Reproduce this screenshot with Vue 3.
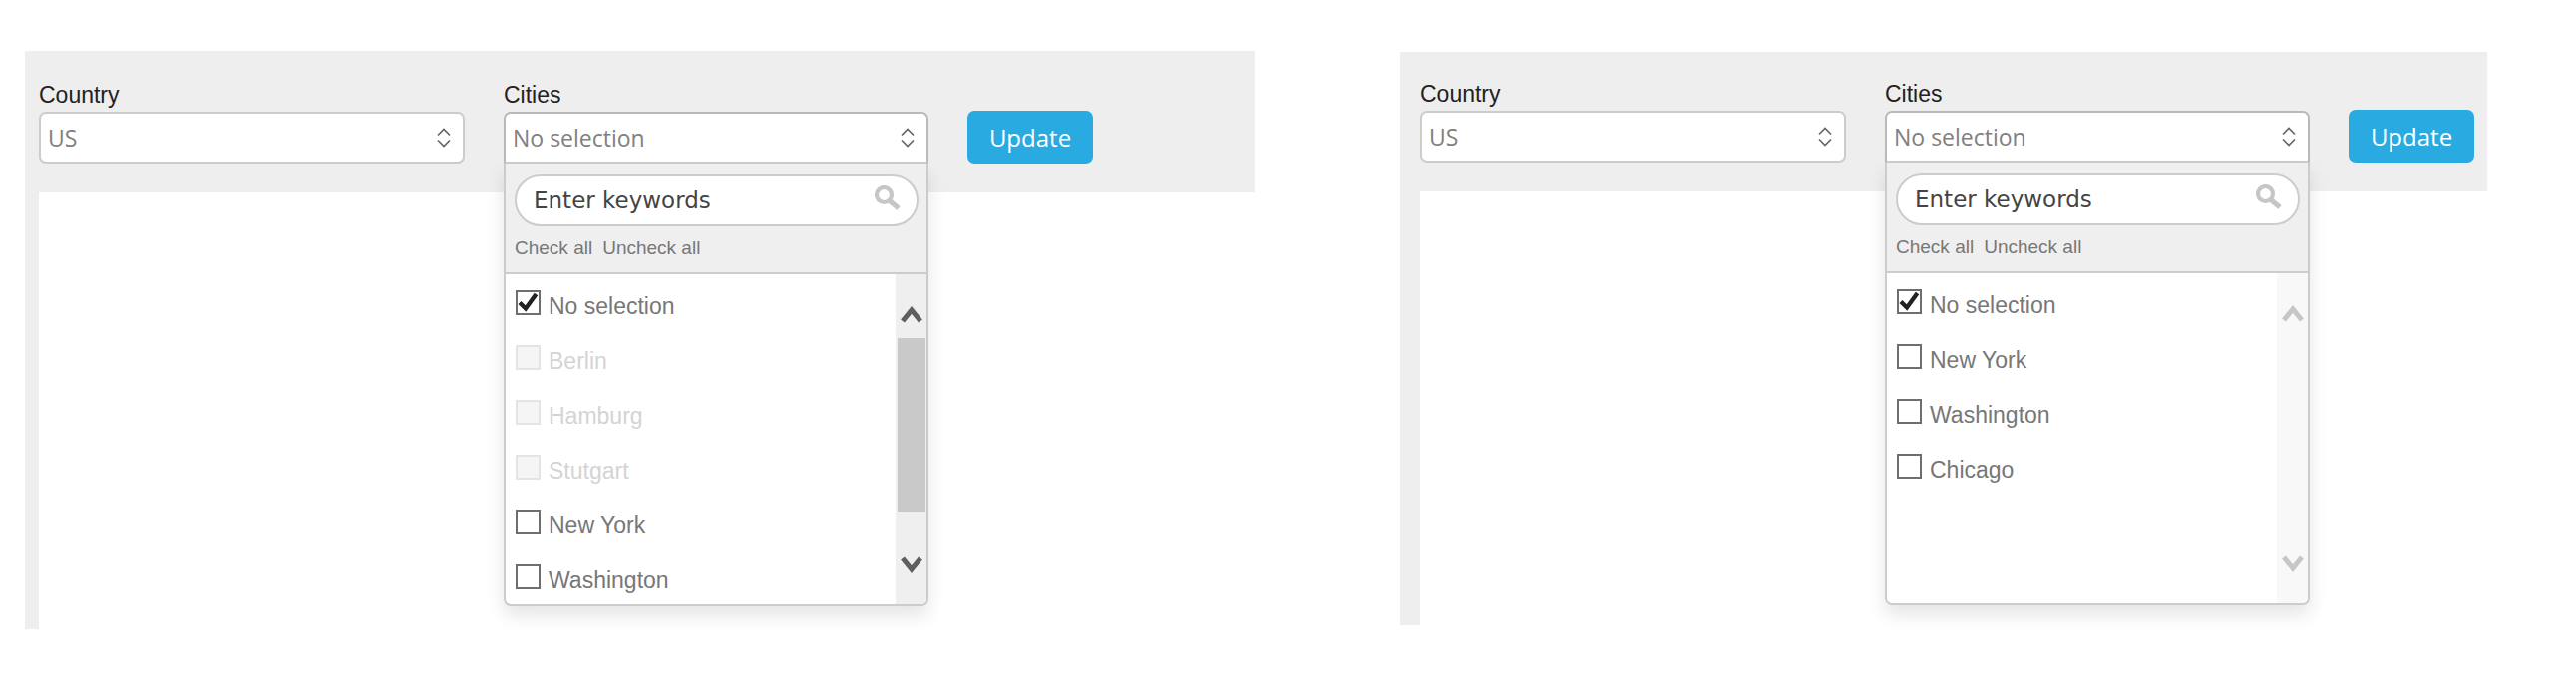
<template>
  <div class="page">
    <section
      v-for="panel in panels"
      :key="panel.id"
      class="panel"
      :class="`panel--${panel.id}`"
    >
      <div class="toolbar">
        <div class="field">
          <label class="field__label">Country</label>
          <div class="select">
            <span class="select__value">US</span>
            <svg class="select__arrows" width="14" height="20" viewBox="0 0 14 20">
              <path d="M1 7.5 7 1.5l6 6M1 12.5l6 6 6-6" />
            </svg>
          </div>
        </div>

        <div class="field field--cities">
          <label class="field__label">Cities</label>
          <div class="select select--open">
            <span class="select__value">No selection</span>
            <svg class="select__arrows" width="14" height="20" viewBox="0 0 14 20">
              <path d="M1 7.5 7 1.5l6 6M1 12.5l6 6 6-6" />
            </svg>
          </div>

          <div class="dropdown">
            <div class="dropdown__head">
              <div class="search">
                <span class="search__text">Enter keywords</span>
                <svg class="search__icon" width="26" height="25" viewBox="0 0 26 25">
                  <circle cx="9.5" cy="9.5" r="7.5" />
                  <path d="m15 15.5 9 7.5" />
                </svg>
              </div>
              <div class="links">
                <a>Check all</a>
                <a>Uncheck all</a>
              </div>
            </div>

            <div class="dropdown__body">
              <ul class="options">
                <li
                  v-for="option in panel.options"
                  :key="option.label"
                  class="option"
                  :class="{ 'option--disabled': option.disabled }"
                >
                  <span class="checkbox">
                    <svg v-if="option.checked" width="21" height="20" viewBox="0 0 21 20">
                      <path d="M2 10.5 8 16.5 18.5 2" />
                    </svg>
                  </span>
                  <span class="option__label">{{ option.label }}</span>
                </li>
              </ul>

              <div class="scrollbar" :class="{ 'scrollbar--idle': !panel.scrollable }">
                <svg class="scrollbar__arrow" width="22" height="18" viewBox="0 0 22 18">
                  <path d="M2 16 11 5l9 11" />
                </svg>
                <div v-if="panel.scrollable" class="scrollbar__thumb"></div>
                <svg class="scrollbar__arrow scrollbar__arrow--down" width="22" height="18" viewBox="0 0 22 18">
                  <path d="M2 2l9 11 9-11" />
                </svg>
              </div>
            </div>
          </div>
        </div>

        <button class="update" type="button">Update</button>
      </div>

      <div class="content"></div>
    </section>
  </div>
</template>

<script setup>
const panels = [
  {
    id: "germany",
    scrollable: true,
    options: [
      { label: "No selection", checked: true },
      { label: "Berlin", disabled: true },
      { label: "Hamburg", disabled: true },
      { label: "Stutgart", disabled: true },
      { label: "New York" },
      { label: "Washington" }
    ]
  },
  {
    id: "us",
    scrollable: false,
    options: [
      { label: "No selection", checked: true },
      { label: "New York" },
      { label: "Washington" },
      { label: "Chicago" }
    ]
  }
];
</script>

<style>
html,
body {
  background: #fff;
  height: 685px;
  overflow: hidden;
}
</style>

<style scoped>
.page {
  align-items: flex-start;
  display: flex;
  gap: 146px;
  padding-left: 25px;
}

.panel {
  background: #eee;
  box-sizing: border-box;
  display: flex;
  flex-direction: column;
  flex: none;
}

.panel--germany {
  height: 580px;
  margin-top: 51px;
  padding-left: 14px;
  width: 1233px;
}

.panel--us {
  height: 575px;
  margin-top: 52px;
  padding-left: 20px;
  width: 1090px;
}

.toolbar {
  align-items: flex-end;
  box-sizing: border-box;
  display: flex;
  flex: none;
  gap: 39px;
  height: 142px;
  padding-bottom: 29px;
}

.panel--us .toolbar {
  height: 140px;
}

.field {
  display: flex;
  flex-direction: column;
  position: relative;
  width: 427px;
}

.field--cities {
  width: 426px;
}

.field__label {
  color: #222;
  font: 23px/26px "Liberation Sans", Arial, sans-serif;
  margin-bottom: 4px;
}

.select {
  align-items: center;
  background: #fff;
  border: 2px solid #ccc;
  border-radius: 7px;
  box-sizing: border-box;
  display: flex;
  height: 52px;
  justify-content: space-between;
  padding: 0 12px 0 7px;
}

.select--open {
  border-color: #b9b9b9;
  border-bottom-color: #ccc;
  border-radius: 7px 7px 0 0;
}

.select__value {
  color: #808080;
  font: 23px/30px "Open Sans", sans-serif;
}

.select__arrows path {
  fill: none;
  stroke: #666;
  stroke-width: 1.7;
}

.dropdown {
  background: #fff;
  border: 2px solid #ccc;
  border-top: 0;
  border-radius: 0 0 7px 7px;
  box-shadow: 0 10px 18px rgba(0, 0, 0, 0.1);
  box-sizing: border-box;
  height: 444px;
  left: 0;
  overflow: hidden;
  position: absolute;
  top: 100%;
  width: 100%;
  z-index: 5;
}

.dropdown__head {
  background: #efefef;
  border-bottom: 2px solid #ccc;
  box-sizing: border-box;
  height: 111px;
  padding: 11px 8px 0 9px;
}

.search {
  align-items: center;
  background: #fff;
  border: 2px solid #ccc;
  border-radius: 26px;
  box-sizing: border-box;
  display: flex;
  height: 52px;
  justify-content: space-between;
  padding: 0 16px 0 17px;
}

.search__text {
  color: #444;
  font: 23px/30px "DejaVu Sans", sans-serif;
}

.search__icon {
  filter: blur(0.5px);
  margin-top: -6px;
}

.search__icon circle,
.search__icon path {
  fill: none;
  stroke: #c6c6c6;
  stroke-width: 4.2;
}

.search__icon path {
  stroke-width: 5;
}

.links {
  color: #777;
  display: flex;
  font: 19px/24px "Liberation Sans", Arial, sans-serif;
  gap: 10px;
  margin-top: 10px;
}

.dropdown__body {
  display: flex;
  height: 331px;
}

.options {
  flex: 1;
  list-style: none;
  margin: 0;
  overflow: hidden;
  padding: 16px 0 0 10px;
}

.option {
  align-items: flex-start;
  display: flex;
  height: 55px;
}

.checkbox {
  background: #fff;
  border: 2px solid #6e6e6e;
  box-sizing: border-box;
  flex: none;
  height: 25px;
  width: 25px;
}

.checkbox svg {
  display: block;
}

.checkbox path {
  fill: none;
  stroke: #222;
  stroke-width: 4.3;
}

.option__label {
  color: #777;
  font: 23px/26px "Liberation Sans", Arial, sans-serif;
  margin: 3px 0 0 8px;
}

.option--disabled .checkbox {
  background: #f5f5f5;
  border-color: #e4e4e4;
}

.option--disabled .option__label {
  color: #d4d4d4;
}

.scrollbar {
  background: #efefef;
  display: flex;
  flex-direction: column;
  flex: none;
  padding: 31px 0 30px;
  width: 31px;
}

.scrollbar--idle {
  background: #f8f8f8;
}

.scrollbar__arrow {
  flex: none;
  margin-left: 5px;
}

.scrollbar__arrow path {
  fill: none;
  stroke: #5f5f5f;
  stroke-width: 5;
}

.scrollbar--idle .scrollbar__arrow path {
  stroke: #c6c6c6;
}

.scrollbar__arrow--down {
  margin-top: auto;
}

.scrollbar__thumb {
  background: #c9c9c9;
  flex: none;
  height: 175px;
  margin: 15px 0 0 2px;
  width: 28px;
}

.update {
  background: #29abe2;
  border: 0;
  border-radius: 7px;
  color: #fff;
  flex: none;
  font: 24px/30px "Open Sans", sans-serif;
  height: 53px;
  padding: 0;
  width: 126px;
}

.content {
  background: #fff;
  flex: 1;
}
</style>
